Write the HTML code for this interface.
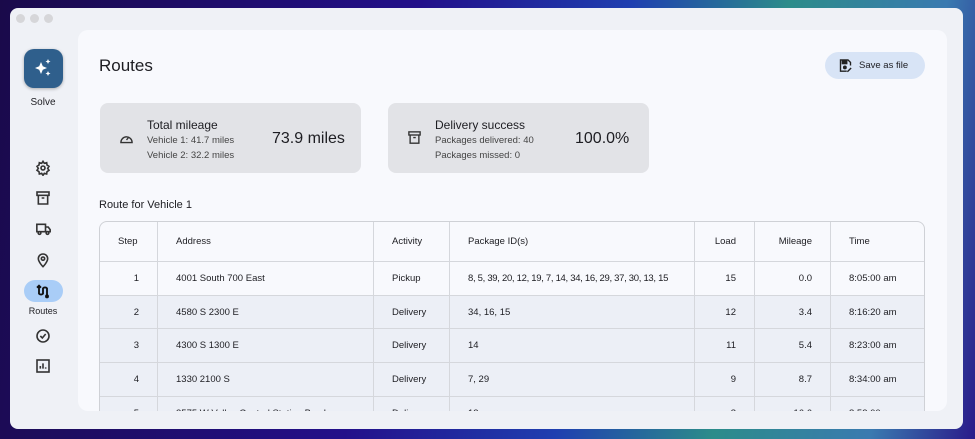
<!DOCTYPE html>
<html><head><meta charset="utf-8"><style>
*{box-sizing:border-box;margin:0;padding:0}
body{width:975px;height:439px;overflow:hidden;font-family:"Liberation Sans",sans-serif;color:#1d1d22;
background:linear-gradient(100deg,#1a0a4a 0%,#23108a 40%,#1f3fb0 60%,#2c8c8a 75%,#3a7ab0 90%,#2a1a8a 100%);position:relative}
.win{position:absolute;left:10px;top:8px;width:953px;height:421px;background:#eff1f6;border-radius:8px}
.dot{position:absolute;top:6px;width:9px;height:9px;border-radius:50%;background:#d6d6d9}
.panel{position:absolute;left:68px;top:22px;width:869px;height:381px;background:#f8f9fd;border-radius:10px;overflow:hidden}
.solve{position:absolute;left:14px;top:41px;width:39px;height:39px;border-radius:10px;background:#2f5f8c;box-shadow:0 1px 3px rgba(0,0,0,.3)}
.lbl{position:absolute;font-size:10px;text-align:center;width:66px;left:0}
.ic{position:absolute;left:25px}
.card{position:absolute;top:73px;width:261px;height:70px;background:#e2e3e7;border-radius:8px}
.card .t{position:absolute;left:47px;top:15px;font-size:12px}
.card .s{position:absolute;left:47px;font-size:9.5px;color:#444}
.card .v{position:absolute;top:27px;font-size:16px}
table{position:absolute;left:21px;top:191px;width:826px;border-collapse:separate;border-spacing:0;border:1px solid #cfd1d6;border-radius:8px;font-size:9.5px;background:#f8f9fd;table-layout:fixed}
td{height:33.7px;border-right:1px solid #d5d7dc;border-bottom:1px solid #d5d7dc;padding:0 18px;white-space:nowrap;overflow:hidden}
td:last-child{border-right:none}
tr.h td{height:40px}
tr.a td{background:#eceff6}
.r{text-align:right}
.pk{letter-spacing:-0.3px;padding-right:4px}
</style></head><body>
<div class="win">
<div class="dot" style="left:6px"></div><div class="dot" style="left:20px"></div><div class="dot" style="left:34px"></div>
<div class="solve"><svg width="39" height="39" viewBox="0 0 39 39" fill="#fff"><path d="M17 13l1.8 4.2 4.2 1.8-4.2 1.8L17 25l-1.8-4.2L11 19l4.2-1.8z"/><path d="M24 10l.8 1.7 1.7.8-1.7.8-.8 1.7-.8-1.7-1.7-.8 1.7-.8z"/><path d="M24 22l.8 1.7 1.7.8-1.7.8-.8 1.7-.8-1.7-1.7-.8 1.7-.8z"/></svg></div>
<div class="lbl" style="top:89px">Solve</div>
<svg class="ic" style="top:152px" width="16" height="16" viewBox="0 0 24 24" fill="none" stroke="#333" stroke-width="2.4"><circle cx="12" cy="12" r="3"/><path d="M12 2l2 3 3.5-1 .5 3.5 3 2-2 3 2 3-3 2-.5 3.5-3.5-1-2 3-2-3-3.5 1-.5-3.5-3-2 2-3-2-3 3-2 .5-3.5 3.5 1z"/></svg>
<svg class="ic" style="top:182px" width="16" height="16" viewBox="0 0 24 24" fill="none" stroke="#333" stroke-width="2.4"><rect x="3" y="3" width="18" height="5"/><path d="M5 8v13h14V8M10 12h4"/></svg>
<svg class="ic" style="top:213px" width="17" height="16" viewBox="0 0 24 24" fill="none" stroke="#333" stroke-width="2.4"><path d="M2 5h13v11H2zM15 9h4l3 4v3h-7"/><circle cx="6" cy="18" r="2"/><circle cx="18" cy="18" r="2"/></svg>
<svg class="ic" style="top:244px" width="16" height="16" viewBox="0 0 24 24" fill="none" stroke="#333" stroke-width="2.4"><path d="M12 22s7-7 7-12a7 7 0 0 0-14 0c0 5 7 12 7 12z"/><circle cx="12" cy="10" r="2.5"/></svg>
<div style="position:absolute;left:14px;top:272px;width:39px;height:22px;border-radius:11px;background:#a9cdf7"></div>
<svg class="ic" style="top:275px" width="16" height="16" viewBox="0 0 24 24" fill="none" stroke="#111" stroke-width="2.8"><path d="M6 4v12a4 4 0 0 0 6 0V8a4 4 0 0 1 6 0v12"/><path d="M3 7l3-3 3 3"/><circle cx="18" cy="20" r="1.5" fill="#111"/></svg>
<div class="lbl" style="top:298px;font-size:9px">Routes</div>
<svg class="ic" style="top:320px" width="16" height="16" viewBox="0 0 24 24" fill="none" stroke="#333" stroke-width="2.4"><circle cx="12" cy="12" r="9"/><path d="M8 12l3 3 5-6"/></svg>
<svg class="ic" style="top:350px" width="16" height="16" viewBox="0 0 24 24" fill="none" stroke="#333" stroke-width="2.4"><rect x="3" y="3" width="18" height="18"/><path d="M8 16v-4M12 16V8M16 16v-2"/></svg>

<div class="panel">
<div style="position:absolute;left:21px;top:26px;font-size:17px">Routes</div>
<div style="position:absolute;left:747px;top:22px;width:100px;height:27px;border-radius:14px;background:#d8e4f6;font-size:9.5px;padding:8px 0 0 34px">Save as file
<svg style="position:absolute;left:13px;top:6px" width="15" height="15" viewBox="0 0 24 24" fill="none" stroke="#222" stroke-width="2.2"><path d="M14 21H4V3h12l4 4v5"/><rect x="7" y="5" width="7" height="4" fill="#222"/><circle cx="11" cy="15" r="2" fill="#222"/><path d="M15 22l6-6"/></svg></div>
<div class="card" style="left:22px">
<svg style="position:absolute;left:19px;top:28px" width="15" height="13" viewBox="0 0 24 20" fill="none" stroke="#333" stroke-width="2.2"><path d="M3 18a9 9 0 1 1 18 0z"/><path d="M12 14l4-5"/></svg>
<div class="t">Total mileage</div><div class="s" style="top:32px">Vehicle 1: 41.7 miles</div><div class="s" style="top:47px">Vehicle 2: 32.2 miles</div><div class="v" style="left:172px">73.9 miles</div></div>
<div class="card" style="left:310px">
<svg style="position:absolute;left:19px;top:27px" width="15" height="15" viewBox="0 0 24 24" fill="none" stroke="#333" stroke-width="2.2"><rect x="3" y="3" width="18" height="5"/><path d="M5 8v13h14V8M10 12h4"/></svg>
<div class="t">Delivery success</div><div class="s" style="top:32px">Packages delivered: 40</div><div class="s" style="top:47px">Packages missed: 0</div><div class="v" style="left:187px">100.0%</div></div>
<div style="position:absolute;left:21px;top:169px;font-size:11px">Route for Vehicle 1</div>
<table>
<tr class="h"><td style="width:58px">Step</td><td style="width:216px">Address</td><td style="width:76px">Activity</td><td style="width:245px">Package ID(s)</td><td class="r" style="width:60px">Load</td><td class="r" style="width:76px">Mileage</td><td>Time</td></tr>
<tr><td class="r">1</td><td>4001 South 700 East</td><td>Pickup</td><td class="pk">8, 5, 39, 20, 12, 19, 7, 14, 34, 16, 29, 37, 30, 13, 15</td><td class="r">15</td><td class="r">0.0</td><td>8:05:00 am</td></tr>
<tr class="a"><td class="r">2</td><td>4580 S 2300 E</td><td>Delivery</td><td>34, 16, 15</td><td class="r">12</td><td class="r">3.4</td><td>8:16:20 am</td></tr>
<tr class="a"><td class="r">3</td><td>4300 S 1300 E</td><td>Delivery</td><td>14</td><td class="r">11</td><td class="r">5.4</td><td>8:23:00 am</td></tr>
<tr class="a"><td class="r">4</td><td>1330 2100 S</td><td>Delivery</td><td>7, 29</td><td class="r">9</td><td class="r">8.7</td><td>8:34:00 am</td></tr>
<tr class="a"><td class="r">5</td><td>3575 W Valley Central Station Bus Loop</td><td>Delivery</td><td>13</td><td class="r">8</td><td class="r">16.6</td><td>8:53:00 am</td></tr>
</table>
</div>
</div>
</body></html>
